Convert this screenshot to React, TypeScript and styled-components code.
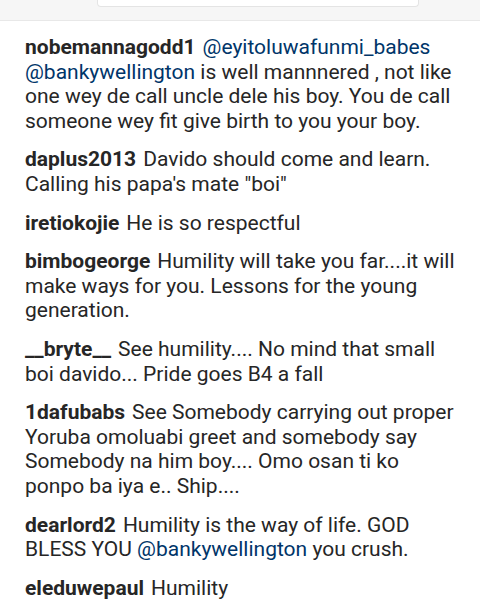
import React, { FC } from 'react'
import styled, { createGlobalStyle } from 'styled-components'

const GlobalStyle = createGlobalStyle`
    html, body {
        margin: 0;
        padding: 0;
        background: #ffffff;
    }
    body {
        font-family: Roboto, "Noto Sans", Arial, sans-serif;
    }
`

const Page = styled.div`
    width: 480px;
    height: 600px;
    overflow: hidden;
    background: #ffffff;
    display: flex;
    flex-direction: column;
`

const TopStrip = styled.div`
    height: 20px;
    flex: none;
    background: #f6f6f6;
    border-bottom: 1px solid #e8e8e8;
    padding-left: 97px;
`

const InputBox = styled.div`
    width: 322px;
    height: 7px;
    background: #ffffff;
    border: 1px solid #e4e4e4;
    border-top: none;
    border-radius: 0 0 4px 4px;
    box-sizing: border-box;
`

const List = styled.div`
    display: flex;
    flex-direction: column;
    gap: 14.3px;
    padding: 14px 22px 0 25px;
`

const Comment = styled.p`
    margin: 0;
    font-size: 21px;
    line-height: 24.5px;
    color: #262626;
`

const User = styled.span`
    font-weight: 700;
    margin-right: 7px;
`

const Mention = styled.span`
    color: #003569;
`

type Part = string | { at: string }

type CommentData = {
    user: string
    parts: Part[]
}

const comments: CommentData[] = [
    {
        user: 'nobemannagodd1',
        parts: [
            { at: '@eyitoluwafunmi_babes' },
            ' ',
            { at: '@bankywellington' },
            ' is well mannnered , not like one wey de call uncle dele his boy. You de call someone wey fit give birth to you your boy.',
        ],
    },
    { user: 'daplus2013', parts: ['Davido should come and learn. Calling his papa\'s mate "boi"'] },
    { user: 'iretiokojie', parts: ['He is so respectful'] },
    {
        user: 'bimbogeorge',
        parts: ['Humility will take you far....it will make ways for you. Lessons for the young generation.'],
    },
    { user: '__bryte__', parts: ['See humility.... No mind that small boi davido... Pride goes B4 a fall'] },
    {
        user: '1dafubabs',
        parts: [
            'See Somebody carrying out proper Yoruba omoluabi greet and somebody say Somebody na him boy.... Omo osan ti ko ponpo ba iya e.. Ship....',
        ],
    },
    {
        user: 'dearlord2',
        parts: ['Humility is the way of life. GOD BLESS YOU ', { at: '@bankywellington' }, ' you crush.'],
    },
    { user: 'eleduwepaul', parts: ['Humility'] },
]

const CommentRow: FC<CommentData> = ({ user, parts }) => (
    <Comment>
        <User>{user}</User>
        {parts.map((p, i) => (typeof p === 'string' ? <React.Fragment key={i}>{p}</React.Fragment> : <Mention key={i}>{p.at}</Mention>))}
    </Comment>
)

export default function App() {
    return (
        <>
            <GlobalStyle />
            <Page>
                <TopStrip>
                    <InputBox />
                </TopStrip>
                <List>
                    {comments.map((c) => (
                        <CommentRow key={c.user} {...c} />
                    ))}
                </List>
            </Page>
        </>
    )
}
